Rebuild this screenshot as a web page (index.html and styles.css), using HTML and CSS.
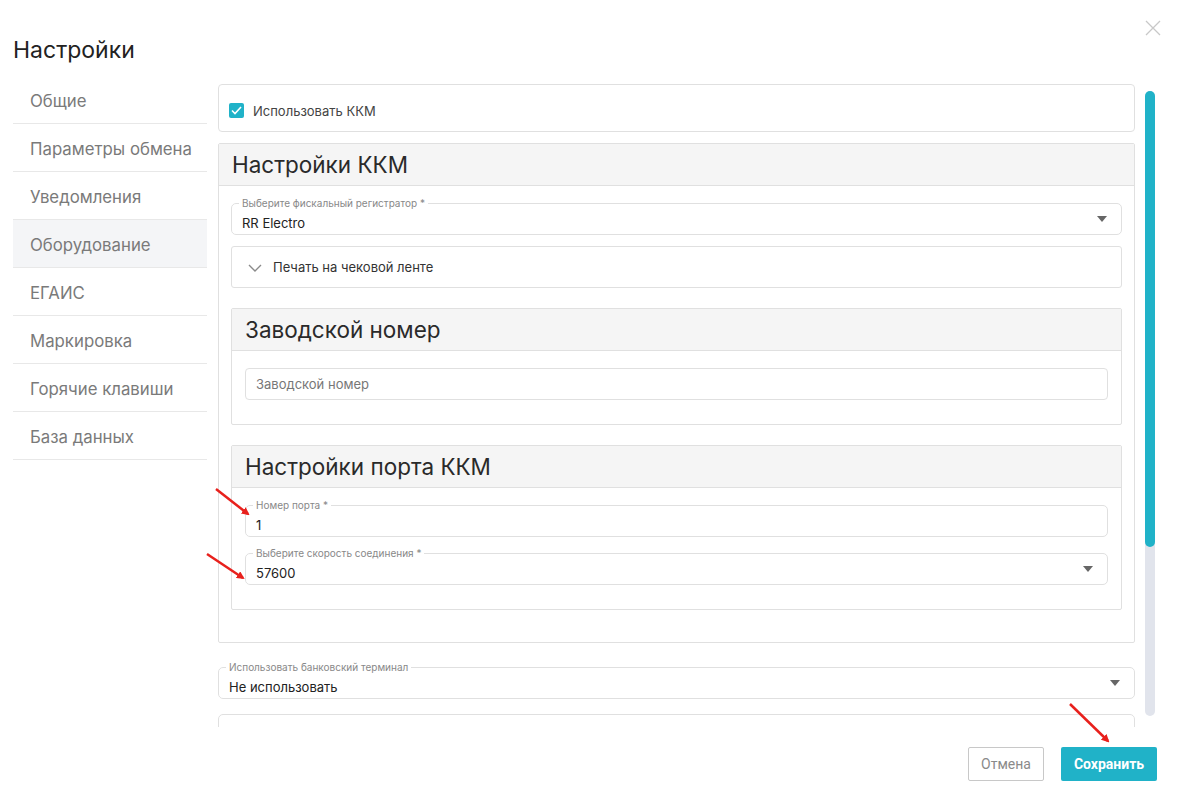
FILE: index.html
```html
<!DOCTYPE html>
<html lang="ru">
<head>
<meta charset="utf-8">
<title>Настройки</title>
<link rel="stylesheet" href="styles.css">
</head>
<body>
<div class="modal">
  <div class="top">
    <button class="close" aria-label="Закрыть">
      <svg width="16" height="16" viewBox="0 0 16 16"><path d="M1 1L15 15M15 1L1 15" stroke="#c8c8c8" stroke-width="1.3" fill="none"/></svg>
    </button>
  </div>
  <h1 class="title">Настройки</h1>
  <div class="main">
    <nav class="nav">
      <a class="nav-item">Общие</a>
      <a class="nav-item">Параметры обмена</a>
      <a class="nav-item">Уведомления</a>
      <a class="nav-item active">Оборудование</a>
      <a class="nav-item">ЕГАИС</a>
      <a class="nav-item">Маркировка</a>
      <a class="nav-item">Горячие клавиши</a>
      <a class="nav-item">База данных</a>
    </nav>
    <div class="scroll">
      <div class="scroll-content">
        <div class="card check-card">
          <label class="check">
            <span class="box"><svg width="11" height="9" viewBox="0 0 11 9"><path d="M1 4.5L4 7.5L10 1" stroke="#fff" stroke-width="1.6" fill="none"/></svg></span>
            Использовать ККМ
          </label>
        </div>

        <div class="card panel">
          <div class="panel-head">Настройки ККМ</div>
          <div class="panel-body">
            <fieldset class="field select">
              <legend>Выберите фискальный регистратор *</legend>
              <div class="value">RR Electro</div>
              <span class="caret"></span>
            </fieldset>
            <div class="collapse">
              <svg class="chev" width="14" height="8" viewBox="0 0 14 8"><path d="M1 1L7 7L13 1" stroke="#8a8a8a" stroke-width="1.4" fill="none"/></svg>
              Печать на чековой ленте
            </div>

            <div class="card sub">
              <div class="panel-head">Заводской номер</div>
              <div class="sub-body serial">
                <div class="input">Заводской номер</div>
              </div>
            </div>

            <div class="card sub last">
              <div class="panel-head">Настройки порта ККМ</div>
              <div class="sub-body">
                <fieldset class="field">
                  <legend>Номер порта *</legend>
                  <div class="value">1</div>
                </fieldset>
                <fieldset class="field select">
                  <legend>Выберите скорость соединения *</legend>
                  <div class="value">57600</div>
                  <span class="caret"></span>
                </fieldset>
              </div>
            </div>
          </div>
        </div>

        <fieldset class="field select wide">
          <legend>Использовать банковский терминал</legend>
          <div class="value">Не использовать</div>
          <span class="caret"></span>
        </fieldset>
        <fieldset class="field wide next">
          <div class="value">&nbsp;</div>
        </fieldset>
      </div>
      <div class="scrollbar"><div class="thumb"></div></div>
    </div>
  </div>
  <div class="footer">
    <button class="btn cancel">Отмена</button>
    <button class="btn save">Сохранить</button>
  </div>

  <svg class="arrows" width="1179" height="800" viewBox="0 0 1179 800">
    <defs>
      <marker id="ah" markerWidth="8" markerHeight="8" refX="6" refY="4" orient="auto" markerUnits="userSpaceOnUse">
        <path d="M0 0L8 4L0 8Z" fill="#e8201c"/>
      </marker>
    </defs>
    <path d="M216 489L248 514" stroke="#e8201c" stroke-width="2.5" marker-end="url(#ah)"/>
    <path d="M207 554L243 578" stroke="#e8201c" stroke-width="2.5" marker-end="url(#ah)"/>
    <path d="M1070 704L1108 741" stroke="#e8201c" stroke-width="2.5" marker-end="url(#ah)"/>
  </svg>
</div>
</body>
</html>
```
FILE: styles.css
```css
* { box-sizing: border-box; }
html, body { margin: 0; padding: 0; background: #fff; }
body {
  font-family: Inter, Roboto, "Noto Sans", sans-serif;
  color: #333;
  width: 1179px;
  height: 800px;
  overflow: hidden;
}
.modal { position: relative; width: 1179px; height: 800px; }
.top { height: 0; display: flex; justify-content: flex-end; }
.close {
  border: 0; background: none; padding: 0; margin: 20px 18px 0 0;
  width: 16px; height: 16px; cursor: pointer; display: block;
}
.title {
  margin: 0; padding: 36px 0 0 13px;
  font-size: 23px; font-weight: 400; line-height: 28px; color: #222;
}
.main { display: flex; margin-top: 11px; }
.nav { width: 194px; margin-left: 13px; padding-top: 1px; display: flex; flex-direction: column; }
.nav-item {
  height: 48px; display: flex; align-items: center; padding: 2px 0 0 17px;
  font-size: 16.8px; color: #7a7a7a; border-bottom: 1px solid #e8e8e8;
}
.nav-item.active { background: #f4f5f7; }
.scroll { display: flex; margin-left: 11px; margin-top: 9px; }
.scroll-content { width: 917px; height: 643px; overflow: hidden; }
.scrollbar {
  width: 10px; height: 625px; margin: 7px 0 0 10px;
  background: #e1e4ec; border-radius: 5px;
}
.thumb { height: 456px; background: #20b2c8; border-radius: 5px; }

.card { border: 1px solid #e0e0e0; border-radius: 4px; background: #fff; }
.check-card { height: 48px; display: flex; align-items: center; padding: 5px 0 0 10px; }
.check { display: flex; align-items: center; font-size: 13px; color: #444; }
.box {
  width: 15px; height: 15px; background: #20b2c8; border-radius: 2px;
  display: inline-flex; align-items: center; justify-content: center; margin-right: 9px;
  margin-top: -1px;
}
.panel { margin-top: 11px; border-radius: 2px; padding-bottom: 32px; }
.panel-head {
  height: 42px; background: #f5f5f5; border-bottom: 1px solid #e0e0e0;
  display: flex; align-items: center; padding-left: 13px;
  font-size: 22.5px; color: #2a2a2a;
}
.panel-body { padding: 11px 12px 0; }

.field {
  position: relative; margin: 0; padding: 4px 30px 0 10px;
  border: 1px solid #e0e0e0; border-radius: 5px; min-width: 0;
}
.field legend {
  font-size: 10px; line-height: 12px; color: #888; padding: 0 3px; margin-left: -3px;
}
.field .value { font-size: 13px; line-height: 20px; height: 21px; color: #222; }
.caret {
  position: absolute; right: 14px; top: 7px;
  width: 0; height: 0; border-left: 5.5px solid transparent; border-right: 5.5px solid transparent;
  border-top: 6px solid #666;
}
.collapse {
  margin-top: 11px; height: 42px; border: 1px solid #e0e0e0; border-radius: 3px;
  display: flex; align-items: center; padding-left: 16px; font-size: 13px; color: #333;
}
.chev { margin-right: 11px; margin-top: 1px; }
.sub { margin-top: 20px; border-radius: 2px; }
.sub-body { padding: 11px 13px 24px; }
.sub-body .field + .field { margin-top: 10px; }
.sub-body.serial { padding: 17px 13px 24px; }
.input {
  height: 32px; border: 1px solid #e0e0e0; border-radius: 4px;
  display: flex; align-items: center; padding-left: 10px;
  font-size: 13px; color: #777;
}
.field.wide { margin-top: 18px; padding-left: 10px; }
.field.next { margin-top: 15px; padding-top: 6px; }

.footer { display: flex; justify-content: flex-end; gap: 17px; padding: 20px 22px 0 0; }
.btn {
  height: 34px; font-family: Roboto, "Liberation Sans", sans-serif; font-size: 14px;
  border-radius: 2px; cursor: pointer;
}
.cancel { width: 76px; background: #fff; border: 1px solid #c8c8c8; color: #8a8a8a; }
.save { width: 96px; background: #20b2c8; border: 0; color: #fff; font-weight: 700; }
.arrows { position: absolute; left: 0; top: 0; pointer-events: none; }
```
